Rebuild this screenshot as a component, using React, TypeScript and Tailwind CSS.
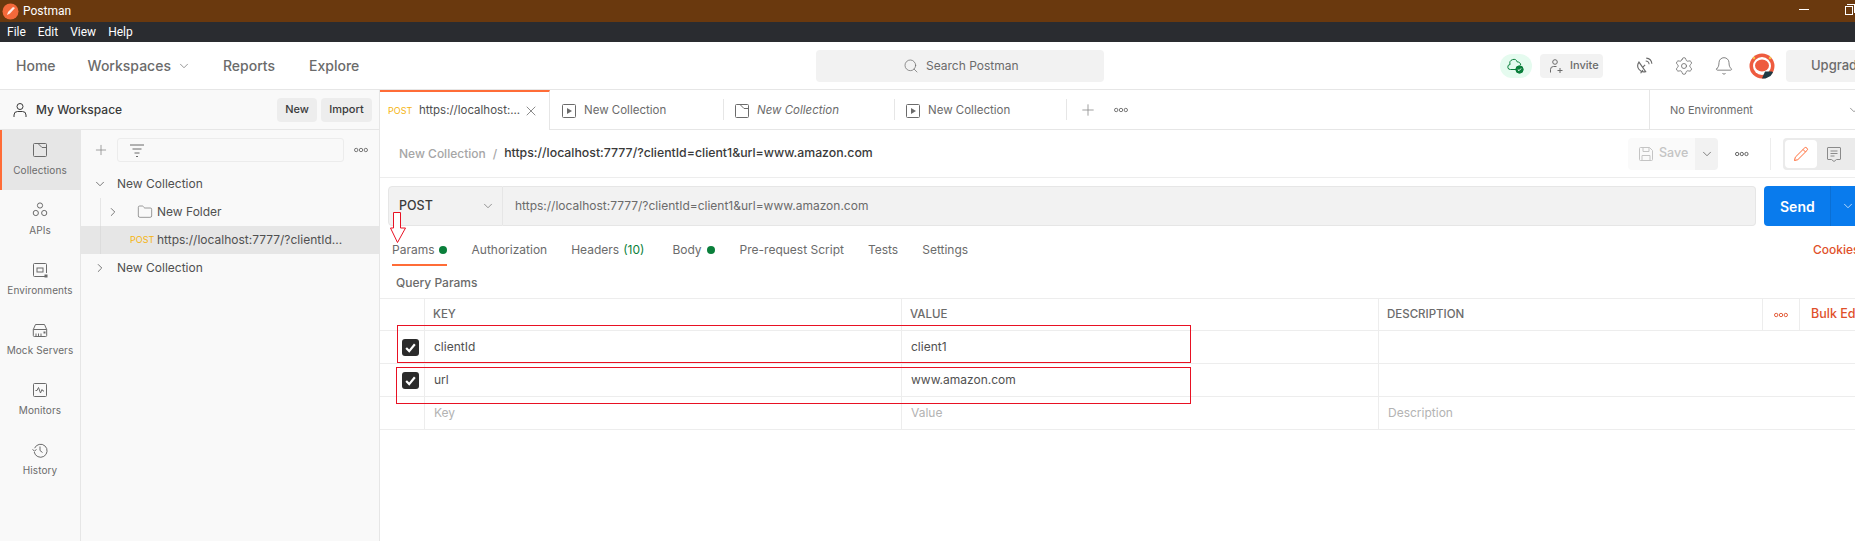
import { Bell, ChevronDown, ChevronRight, Folder, Plus, Search, Settings, X } from 'lucide-react';
import type { ReactNode } from 'react';

const font = "font-['Inter','Liberation_Sans',sans-serif]";

function Svg({ size = 16, className = '', children }: { size?: number; className?: string; children: ReactNode }) {
  return (
    <svg width={size} height={size} viewBox="0 0 16 16" fill="none" stroke="currentColor" strokeWidth="1" className={className}>
      {children}
    </svg>
  );
}

const CollectionIcon = ({ className = '' }: { className?: string }) => (
  <Svg className={className}>
    <path d="M2.5 1.5h11a1 1 0 0 1 1 1v11a1 1 0 0 1-1 1h-11a1 1 0 0 1-1-1v-11a1 1 0 0 1 1-1z" />
    <path d="M6 1.5 L10 5.5 H14.5" />
  </Svg>
);
const ApiIcon = () => (
  <Svg>
    <circle cx="8" cy="3.5" r="2.6" />
    <circle cx="3.8" cy="11" r="2.6" />
    <circle cx="12.2" cy="11" r="2.6" />
  </Svg>
);
const EnvIcon = () => (
  <Svg>
    <path d="M13 14.5H2.5a1 1 0 0 1-1-1v-11a1 1 0 0 1 1-1h11a1 1 0 0 1 1 1V11" />
    <rect x="5" y="6" width="6" height="4" />
    <rect x="12.5" y="12.5" width="3" height="3" fill="currentColor" stroke="none" />
  </Svg>
);
const MockIcon = () => (
  <Svg>
    <path d="M3.5 2.5h9l2.2 5v6a1 1 0 0 1-1 1H2.3a1 1 0 0 1-1-1v-6z" />
    <path d="M1.3 7.5h13.4M4 14.5v-3M6.5 14.5v-3M9 14.5v-3" />
    <rect x="11.5" y="9.5" width="2" height="2" fill="currentColor" stroke="none" />
  </Svg>
);
const MonitorIcon = () => (
  <Svg>
    <rect x="1.5" y="1.5" width="13" height="13" rx="1" />
    <path d="M3.5 8.5h1.5l1.5-3 2 5.5 1.5-3.5 1 1.5h1" />
  </Svg>
);
const HistoryIcon = () => (
  <Svg>
    <path d="M2.6 6.2A6.5 6.5 0 1 1 2.2 10" />
    <path d="M0.5 7.5 L2.5 9 L4.5 7.5" />
    <path d="M8 4.5V8.5L10.5 10.5" />
  </Svg>
);
const PlaySquare = () => (
  <Svg className="text-[#6b6b6b]">
    <rect x="1.5" y="1.5" width="13" height="13" rx="1" />
    <path d="M6 5l5 3-5 3z" fill="currentColor" stroke="none" />
  </Svg>
);
const Dots = ({ className = 'text-[#6b6b6b]' }: { className?: string }) => (
  <svg width="14" height="6" viewBox="0 0 14 6" fill="none" stroke="currentColor" strokeWidth="0.9" className={className}>
    <circle cx="2.2" cy="3" r="1.7" />
    <circle cx="7" cy="3" r="1.7" />
    <circle cx="11.8" cy="3" r="1.7" />
  </svg>
);
const FilterIcon = () => (
  <Svg className="text-[#6b6b6b]">
    <path d="M1 3h14M3.5 7h9M5.5 11h5M7 14.5h2" />
  </Svg>
);
const CloudCheck = () => (
  <svg width="18" height="18" viewBox="0 0 18 18" fill="none" stroke="#0a7f3b" strokeWidth="1">
    <path d="M9.5 12.5H3.5a2.5 2.5 0 0 1-.4-5A3.8 3.8 0 0 1 10.3 5a3 3 0 0 1 3.4 3" />
    <circle cx="12.5" cy="12.5" r="3.7" fill="#0a7f3b" />
    <path d="M10.8 12.5l1.2 1.2 2-2.2" stroke="#fff" />
  </svg>
);
const InviteIcon = () => (
  <Svg className="text-[#6b6b6b]">
    <circle cx="7" cy="4" r="2.3" />
    <path d="M2.5 14.5v-3a3 3 0 0 1 3-3h3M12 10v5M9.5 12.5h5" />
  </Svg>
);
const DishIcon = () => (
  <Svg size={18} className="text-[#6b6b6b]">
    <path d="M3.5 4.5a5.5 5.5 0 0 0 6 8.5z" />
    <path d="M5 14.5l2-3M7 9l2-2" />
    <path d="M9.5 3.5a3 3 0 0 1 3 3M10 1a5.5 5.5 0 0 1 5 5" />
  </Svg>
);
const SaveIcon = () => (
  <Svg className="text-[#c4c4c4]">
    <path d="M2.5 1.5h9l3 3v9a1 1 0 0 1-1 1h-11a1 1 0 0 1-1-1v-11a1 1 0 0 1 1-1z" />
    <path d="M5 1.5v4h6v-4M4 14.5v-5h8v5" />
  </Svg>
);
const PencilIcon = () => (
  <Svg className="text-[#ff6c37]">
    <path d="M1.5 14.5l.8-3.3L11.5 2a1.6 1.6 0 0 1 2.3 0l.2.2a1.6 1.6 0 0 1 0 2.3l-9.2 9.2z" />
    <path d="M10 3.5l2.5 2.5" />
  </Svg>
);
const CommentIcon = () => (
  <Svg className="text-[#8a8a8a]">
    <path d="M2 1.5h12a.5.5 0 0 1 .5.5v11a.5.5 0 0 1-.5.5h-3.5L8 15.5l-2.5-2H2a.5.5 0 0 1-.5-.5V2a.5.5 0 0 1 .5-.5z" />
    <path d="M4.5 5h7M4.5 7.5h7M4.5 10h4" />
  </Svg>
);
const UserIcon = () => (
  <Svg className="text-[#3a3a3a]">
    <circle cx="8" cy="4.5" r="3" />
    <path d="M2 15v-2a3.5 3.5 0 0 1 3.5-3.5h5A3.5 3.5 0 0 1 14 13v2" />
  </Svg>
);

function Avatar() {
  return (
    <svg width="26" height="26" viewBox="0 0 26 26">
      <circle cx="13" cy="13" r="12.5" fill="#ee5b3f" />
      <circle cx="13" cy="13" r="9" fill="#fff" />
      <ellipse cx="13" cy="12.5" rx="7" ry="6" fill="#ee5b3f" />
      <path d="M13 25.5l3-7h7l1 1-2.5 3.5-5 2.5z" fill="#1f3a44" />
      <circle cx="5" cy="5" r="1.2" fill="#f6c343" />
      <circle cx="21" cy="5" r="1.2" fill="#f6c343" />
    </svg>
  );
}

function PostmanLogo() {
  return (
    <svg width="17" height="17" viewBox="0 0 17 17">
      <circle cx="8.5" cy="8.5" r="8" fill="#f4693a" />
      <path d="M5 12l1-3 5-5 2 1-5 5.5z" fill="#fff" opacity="0.85" />
    </svg>
  );
}

const railItems = [
  { label: 'Collections', icon: <CollectionIcon />, active: true },
  { label: 'APIs', icon: <ApiIcon /> },
  { label: 'Environments', icon: <EnvIcon /> },
  { label: 'Mock Servers', icon: <MockIcon /> },
  { label: 'Monitors', icon: <MonitorIcon /> },
  { label: 'History', icon: <HistoryIcon /> },
];

function Rail() {
  return (
    <div className="w-[81px] shrink-0 border-r border-[#e6e6e6] flex flex-col">
      {railItems.map((item) => (
        <div
          key={item.label}
          className={`h-[60px] flex flex-col items-center pt-3 gap-[5px] text-[#6b6b6b] ${item.active ? 'bg-[#e6e6e6] border-l-2 border-[#ff6c37] pr-[2px]' : ''}`}
        >
          {item.icon}
          <span className="text-[10px] leading-[14px] tracking-[0.1px]">{item.label}</span>
        </div>
      ))}
    </div>
  );
}

function Tree() {
  return (
    <div className="flex-1 min-w-0 flex flex-col">
      <div className="flex items-center h-10 pl-3">
        <Plus size={18} strokeWidth={1.2} className="text-[#8a8a8a] w-4 shrink-0" />
        <div className="ml-2 w-[227px] h-6 border border-[#ececec] rounded-[3px] bg-[#f9f9f9] flex items-center pl-[11px]">
          <FilterIcon />
        </div>
        <Dots className="ml-[10px] text-[#6b6b6b]" />
      </div>
      <div className="h-7 flex items-center text-xs text-[#505050] pl-[12px]">
        <ChevronDown size={14} strokeWidth={1.3} />
        <span className="ml-[10px]">New Collection</span>
      </div>
      <div className="h-7 flex items-center text-xs text-[#505050] pl-[25px] relative">
        <span className="absolute left-[19px] top-0 bottom-0 w-px bg-[#e6e6e6]" />
        <ChevronRight size={14} strokeWidth={1.3} />
        <Folder size={16} strokeWidth={1} className="ml-[17px] text-[#6b6b6b]" />
        <span className="ml-[4px]">New Folder</span>
      </div>
      <div className="h-7 flex items-center text-xs text-[#505050] bg-[#e6e6e6] pl-[49px] relative">
        <span className="absolute left-[19px] top-0 bottom-0 w-px bg-[#dcdcdc]" />
        <span className="text-[9px] w-[27px] text-[#f5b40f]">POST</span>
        <span>https://localhost:7777/?clientId...</span>
      </div>
      <div className="h-7 flex items-center text-xs text-[#505050] pl-[12px]">
        <ChevronRight size={14} strokeWidth={1.3} />
        <span className="ml-[10px]">New Collection</span>
      </div>
    </div>
  );
}

function Tab({ icon, label, italic, className }: { icon: ReactNode; label: string; italic?: boolean; className: string }) {
  return (
    <div className={`${className} shrink-0 flex items-center pl-[10px] pt-[2px] gap-[7px] relative text-[11.5px] text-[#6b6b6b]`}>
      <span className="absolute right-0 top-[9px] h-[21px] w-px bg-[#e6e6e6]" />
      {icon}
      <span className={italic ? 'italic' : ''}>{label}</span>
    </div>
  );
}

function SubTab({ children, className = '' }: { children: ReactNode; className?: string }) {
  return <span className={`text-xs text-[#6b6b6b] ${className}`}>{children}</span>;
}

const Dot = ({ className = '' }: { className?: string }) => (
  <span className={`inline-block w-2 h-2 rounded-full bg-[#0a7f3b] ${className}`} />
);

function Checkbox() {
  return (
    <span className="w-[17px] h-[17px] bg-[#2b2b2b] rounded-[3px] flex items-center justify-center">
      <svg width="13" height="13" viewBox="0 0 12 12" fill="none" stroke="#fff" strokeWidth="2">
        <path d="M2 6.5l2.8 2.8L10 3" />
      </svg>
    </span>
  );
}

const gridCols = 'grid grid-cols-[45px_477px_477px_384px_37px_1fr]';
const cell = 'border-r border-[#ededed] flex items-center pl-[9px] text-xs';
const headCell = 'border-r border-[#ededed] flex items-center pl-2 text-[11.5px]';

function ParamRow({ k, v, placeholder }: { k: string; v: string; placeholder?: boolean }) {
  const color = placeholder ? 'text-[#b3b3b3]' : 'text-[#505050]';
  return (
    <div className={`${gridCols} h-[33px] border-b border-[#ededed]`}>
      <div className="border-r border-[#ededed] flex items-center pl-[22px]">{!placeholder && <Checkbox />}</div>
      <div className={`${cell} ${color}`}>{k}</div>
      <div className={`${cell} ${color}`}>{v}</div>
      <div className={`${cell} col-span-3 border-r-0 text-[#b3b3b3]`}>{placeholder ? 'Description' : ''}</div>
    </div>
  );
}

export default function App() {
  return (
    <div className={`${font} relative w-[1855px] h-[541px] overflow-hidden bg-white flex flex-col`}>
      {/* Title bar */}
      <div className="h-[22px] shrink-0 bg-[#6a390e] flex items-center pl-[2px] text-white text-xs relative">
        <PostmanLogo />
        <span className="ml-[4px] font-['Roboto',sans-serif] text-[12px]">Postman</span>
        <span className="absolute left-[1799px] top-[9px] w-[10px] h-px bg-white" />
        <span className="absolute left-[1845px] top-[6px] w-[8px] h-[9px] border border-white" />
        <span className="absolute left-[1847px] top-[4px] w-[8px] h-[9px] border-t border-r border-white" />
      </div>
      {/* Menu */}
      <div className="h-[20px] shrink-0 bg-[#2a2c30] flex items-center gap-3 pl-[7px] text-white text-xs font-['Roboto',sans-serif]">
        <span>File</span>
        <span>Edit</span>
        <span>View</span>
        <span>Help</span>
      </div>
      {/* Top nav */}
      <div className="h-[48px] shrink-0 border-b border-[#e6e6e6] flex items-center pl-4 relative text-[14px] font-medium text-[#6b6b6b]">
        <span>Home</span>
        <span className="ml-[32px]">Workspaces</span>
        <ChevronDown size={14} strokeWidth={1.2} className="ml-[6px]" />
        <span className="ml-[32px]">Reports</span>
        <span className="ml-[34px]">Explore</span>
        <div className="absolute left-[816px] top-2 w-[288px] h-8 rounded bg-[#f2f2f2] flex items-center pl-[87px] gap-[7px] text-xs font-normal">
          <Search size={16} strokeWidth={1.1} className="shrink-0" />
          <span>Search Postman</span>
        </div>
        <div className="ml-auto flex items-center">
          <div className="w-8 h-6 rounded-full bg-[#e5fbef] flex items-center justify-center"><CloudCheck /></div>
          <div className="ml-2 w-[63px] h-6 rounded bg-[#f2f2f2] flex items-center pl-2 gap-[6px] text-[11px]">
            <InviteIcon />
            <span>Invite</span>
          </div>
          <div className="ml-[32px]"><DishIcon /></div>
          <Settings size={20} strokeWidth={1} className="ml-[21px]" />
          <Bell size={20} strokeWidth={1} className="ml-[20px]" />
          <div className="ml-[15px]"><Avatar /></div>
          <div className="ml-[11px] w-[80px] h-8 rounded-l bg-[#f2f2f2] flex items-center pl-[25px] text-[13px] mr-[-11px]">Upgrade</div>
        </div>
      </div>
      {/* Body */}
      <div className="flex-1 flex min-h-0">
        {/* Sidebar */}
        <div className="w-[380px] shrink-0 bg-[#f9f9f9] border-r border-[#e6e6e6] flex flex-col">
          <div className="h-10 shrink-0 border-b border-[#e6e6e6] flex items-center pl-[12px] pr-[7px]">
            <UserIcon />
            <span className="ml-[8px] text-xs font-medium text-[#3a3a3a]">My Workspace</span>
            <button className="ml-auto w-10 h-6 rounded bg-[#ededed] text-[11px] font-medium text-[#3a3a3a]">New</button>
            <button className="ml-1 w-[51px] h-6 rounded bg-[#ededed] text-[11px] font-medium text-[#3a3a3a]">Import</button>
          </div>
          <div className="flex-1 flex min-h-0">
            <Rail />
            <Tree />
          </div>
        </div>
        {/* Main */}
        <div className="flex-1 min-w-0 flex flex-col">
          {/* Tabs */}
          <div className="h-10 shrink-0 border-b border-[#e6e6e6] flex relative">
            <div className="w-[170px] shrink-0 border-t-2 border-[#ff6c37] border-r border-r-[#e6e6e6] bg-white flex items-center pl-2 text-xs text-[#505050] h-10">
              <span className="text-[9px] w-[31px] text-[#f5b40f]">POST</span>
              <span className="text-[11.5px]">https://localhost:...</span>
              <X size={16} strokeWidth={1} className="ml-auto mr-[10px]" />
            </div>
            <Tab className="w-[174px] pl-[11px]" icon={<PlaySquare />} label="New Collection" />
            <Tab className="w-[171px]" icon={<CollectionIcon className="text-[#6b6b6b]" />} label="New Collection" italic />
            <Tab className="w-[172px]" icon={<PlaySquare />} label="New Collection" />
            <div className="flex items-center pl-[12px] text-[#8a8a8a]">
              <Plus size={18} strokeWidth={1.1} />
              <Dots className="ml-[17px] text-[#6b6b6b]" />
            </div>
            <div className="absolute left-[1269px] top-0 bottom-0 border-l border-[#e6e6e6] flex items-center pl-5 pt-[1px] w-[206px] text-[11px] text-[#6b6b6b]">
              <span>No Environment</span>
              <ChevronDown size={14} strokeWidth={1.2} className="ml-auto mr-[-6px]" />
            </div>
          </div>
          {/* Breadcrumb */}
          <div className="h-[48px] shrink-0 border-b border-[#ededed] flex items-center pl-[19px] text-xs font-medium">
            <span className="text-[#a6a6a6]">New Collection</span>
            <span className="mx-[7px] text-[#a6a6a6]">/</span>
            <span className="text-[12.3px] text-[#3a3a3a]">https://localhost:7777/?clientId=client1&amp;url=www.amazon.com</span>
            <div className="ml-auto flex items-center shrink-0 w-[227px]">
              <div className="w-[69px] h-8 bg-[#fafafa] rounded-l flex items-center pl-[10px] gap-[5px] text-[12.5px] text-[#c4c4c4]">
                <SaveIcon />
                <span>Save</span>
              </div>
              <div className="w-6 h-8 bg-[#f2f2f2] rounded-r flex items-center justify-center text-[#505050]">
                <ChevronDown size={14} strokeWidth={1.2} />
              </div>
              <Dots className="ml-[17px] text-[#505050]" />
              <span className="ml-[21px] w-px h-8 bg-[#ededed]" />
              <div className="ml-[12px] w-[72px] shrink-0 h-8 bg-[#ebebeb] rounded-l flex items-center pl-[2px]">
                <div className="w-[32px] h-7 rounded bg-white flex items-center justify-center"><PencilIcon /></div>
                <div className="ml-[9px]"><CommentIcon /></div>
              </div>
            </div>
          </div>
          {/* Request bar */}
          <div className="flex h-10 mt-2 shrink-0 pl-2">
            <div className="w-[115px] h-10 bg-[#f2f2f2] border border-[#e6e6e6] rounded-l flex items-center pl-[10px] pr-[7px] text-[12.5px] font-medium text-[#3a3a3a]">
              <span>POST</span>
              <ChevronDown size={14} strokeWidth={1.2} className="ml-auto text-[#6b6b6b]" />
            </div>
            <div className="w-[1253px] h-10 bg-[#f2f2f2] border-y border-r border-[#e6e6e6] rounded-r flex items-center pl-[12px] text-xs text-[#6b6b6b]">
              https://localhost:7777/?clientId=client1&amp;url=www.amazon.com
            </div>
            <div className="ml-2 w-[91px] h-10 bg-[#097bed] rounded-l flex items-center text-white shrink-0">
              <span className="w-[67px] pl-[16px] text-[14px] font-semibold">Send</span>
              <span className="h-10 border-l border-[#0a6fd4] flex items-center pl-[10px]">
                <ChevronDown size={14} strokeWidth={1.2} />
              </span>
            </div>
          </div>
          {/* Sub tabs */}
          <div className="h-[40px] shrink-0 flex items-center pl-3 pt-2 relative">
            <SubTab>Params</SubTab>
            <Dot className="ml-1" />
            <span className="absolute left-3 top-[38px] w-[55px] h-[2px] bg-[#ff6c37]" />
            <SubTab className="ml-[25px]">Authorization</SubTab>
            <SubTab className="ml-[24px]">Headers</SubTab>
            <span className="ml-[4px] text-xs text-[#0a7f3b]">(10)</span>
            <SubTab className="ml-[28px]">Body</SubTab>
            <Dot className="ml-[5px]" />
            <SubTab className="ml-[25px]">Pre-request Script</SubTab>
            <SubTab className="ml-[24px]">Tests</SubTab>
            <SubTab className="ml-[24px]">Settings</SubTab>
            <span className="absolute left-[1433px] text-xs font-medium text-[#e0502a]">Cookies</span>
          </div>
          {/* Query params */}
          <div className="h-[32px] shrink-0 flex items-center pl-4 pt-[2px] text-xs font-medium text-[#6b6b6b]">Query Params</div>
          {/* Table */}
          <div className="border-t border-[#ededed]">
            <div className={`${gridCols} h-[32px] border-b border-[#ededed] font-medium text-[#6b6b6b]`}>
              <div className="border-r border-[#ededed]" />
              <div className={headCell}>KEY</div>
              <div className={headCell}>VALUE</div>
              <div className={headCell}>DESCRIPTION</div>
              <div className="border-r border-[#ededed] flex items-center justify-center"><Dots className="text-[#e0502a]" /></div>
              <div className="flex items-center pl-[11px] text-[12.5px] text-[#e0502a] whitespace-nowrap">Bulk Edit</div>
            </div>
            <ParamRow k="clientId" v="client1" />
            <ParamRow k="url" v="www.amazon.com" />
            <ParamRow k="Key" v="Value" placeholder />
          </div>
        </div>
      </div>
      {/* Red annotations drawn over the screenshot */}
      <div className="absolute left-[397px] top-[325px] w-[794px] h-[38px] border border-[#e81123]" />
      <div className="absolute left-[396px] top-[367px] w-[795px] h-[37px] border border-[#e81123]" />
      <svg width="16" height="32" viewBox="0 0 16 32" fill="white" stroke="#e81123" className="absolute left-[390px] top-[212px]">
        <path d="M3.5 .5h7v15.5h5L7.5 30.5 .5 16h3z" />
      </svg>
    </div>
  );
}
